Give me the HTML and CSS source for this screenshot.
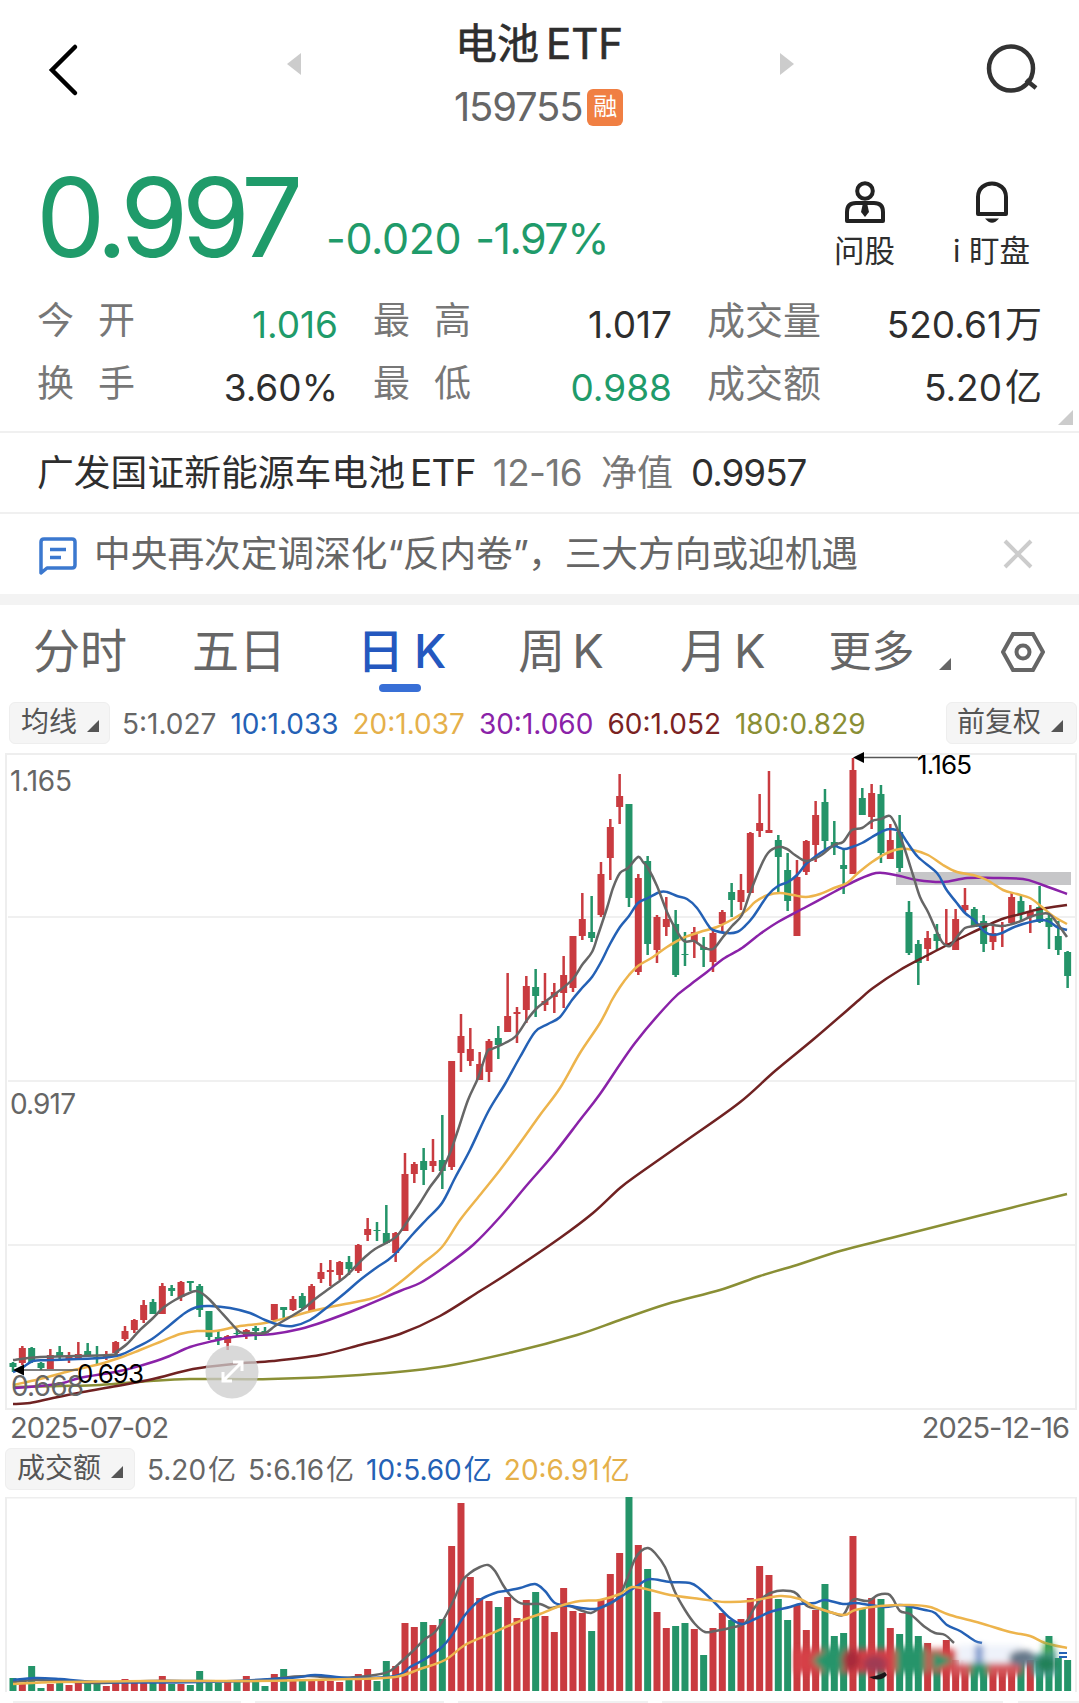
FILE: index.html
```html
<!DOCTYPE html>
<html lang="zh-CN">
<head>
<meta charset="UTF-8">
<meta name="viewport" content="width=device-width, initial-scale=1.0">
<title>电池ETF 159755</title>

<link rel="stylesheet" href="styles.css">
</head>

<body>

<header class="topbar">
<svg class="back" width="32" height="54" viewBox="0 0 32 54"><path d="M28 4L5 27L28 50"/></svg>
<svg class="arrow" width="14" height="22" viewBox="0 0 14 22"><path d="M14 0V22L0 11Z"/></svg>
<div class="title">
<h1><span>电池</span><span class="etf">ETF</span></h1>
<div class="code"><span>159755</span><i class="tag">融</i></div>
</div>
<svg class="arrow" width="14" height="22" viewBox="0 0 14 22"><path d="M0 0V22L14 11Z"/></svg>
<svg class="search" width="56" height="52" viewBox="0 0 56 52"><circle cx="26" cy="25.500" r="22"/><path d="M41 37L51 45"/></svg>
</header>

<section class="quote">
<div class="price">0.997</div>
<div class="change"><span>-0.020</span><span class="pct">-1.97%</span></div>
<div class="actions">
<div class="action">
<svg width="40" height="44" viewBox="0 0 40 44"><circle cx="20" cy="10" r="7.800"/><path d="M2 40V31Q2 22 11 22H29Q38 22 38 31V40Z"/><path class="fill" d="M18 22H22L24 31L20 36L16 31Z"/></svg>
<span>问股</span>
</div>
<div class="action">
<svg width="40" height="44" viewBox="0 0 40 44"><path d="M6 33V16C6 -2 34 -2 34 16V33Z"/><path class="fill" d="M13 37.500H27Q20 46 13 37.500Z"/></svg>
<span>i 盯盘</span>
</div>
</div>
</section>

<section class="stats">
<div class="stat"><label class="wide">今开</label><b class="down">1.016</b></div>
<div class="stat"><label class="wide">最高</label><b>1.017</b></div>
<div class="stat"><label>成交量</label><b>520.61<em>万</em></b></div>
<div class="stat"><label class="wide">换手</label><b>3.60%</b></div>
<div class="stat"><label class="wide">最低</label><b class="down">0.988</b></div>
<div class="stat"><label>成交额</label><b>5.20<em>亿</em></b></div>
<i class="corner"></i>
</section>

<section class="fund">
<span class="name">广发国证新能源车电池</span><span class="fund-etf">ETF</span>
<span class="date">12-16</span>
<span class="nav-label">净值</span>
<span class="nav-value">0.9957</span>
</section>

<section class="news">
<svg class="msg" width="38" height="38" viewBox="0 0 38 38"><path d="M2 36V5Q2 2 5 2H33Q36 2 36 5V28Q36 31 33 31H8Z"/><path d="M11 12.500H27M11 20.500H22"/></svg>
<p>中央再次定调深化<span class="q">“</span>反内卷<span class="q">”</span>，三大方向或迎机遇</p>
<svg class="close" width="30" height="30" viewBox="0 0 30 30"><path d="M2 2L28 28M28 2L2 28"/></svg>
</section>

<nav class="tabs">
<a>分时</a>
<a>五日</a>
<a class="active">日<span>K</span></a>
<a class="week">周<span>K</span></a>
<a class="month">月<span>K</span></a>
<a class="more">更多<i></i></a>
<svg class="gear" width="44" height="42" viewBox="0 0 44 42"><path d="M12 3H32L42 21L32 39H12L2 21Z"/><circle cx="22" cy="21" r="6.500"/></svg>
</nav>

<div class="legend">
<span class="chip">均线<i></i></span>
<span class="ma5">5:1.027</span>
<span class="ma10">10:1.033</span>
<span class="ma20">20:1.037</span>
<span class="ma30">30:1.060</span>
<span class="ma60">60:1.052</span>
<span class="ma180">180:0.829</span>
<span class="chip right">前复权<i></i></span>
</div>

<svg class="chart" id="kline" width="1079" height="662" viewBox="0 0 1079 662">
<rect class="frame" x="6" y="4" width="1070" height="655"/>
<path class="grid" d="M8 167H1075M8 331H1075M8 495H1075"/>
<rect class="band" x="896" y="122" width="175" height="13"/>
<g id="candles"></g>
<g id="maLines"></g>
<text class="axis" x="10" y="41" textLength="62">1.165</text>
<text class="axis" x="10" y="364" textLength="66">0.917</text>
<text class="axis" x="11" y="646" textLength="73">0.668</text>
<path class="pointer" d="M22 620H78M864 7.500H918"/>
<path class="head" d="M13 620L24 614.500V625.500ZM853 7.500L864 2V13Z"/>
<text class="mark" x="77" y="633" textLength="67">0.693</text>
<text class="mark" x="917" y="24" textLength="55">1.165</text>
<g class="expand">
<circle cx="232" cy="622" r="26.500"/>
<path d="M223 631L242 612M233 612H242V621M223 622V631H232"/>
</g>
</svg>

<div class="dates"><span>2025-07-02</span><span>2025-12-16</span></div>

<div class="legend vol-legend">
<span class="chip">成交额<i></i></span>
<span class="ma5">5.20<em>亿</em></span>
<span class="ma5">5:6.16<em>亿</em></span>
<span class="ma10">10:5.60<em>亿</em></span>
<span class="ma20">20:6.91<em>亿</em></span>
</div>

<svg class="chart" id="volume" width="1079" height="206" viewBox="0 0 1079 206">
<defs>
<filter id="soft" x="-10%" y="-40%" width="120%" height="180%"><feGaussianBlur stdDeviation="3"/></filter>
</defs>
<path class="frame" d="M6 195V0.500H1076V195"/>
<g id="bars"></g>
<g id="volLines"></g>
<g class="smudge" filter="url(#soft)">
<path class="pale" d="M958 148H1022V166H958Z"/>
<path class="red" d="M795 152H956V176H795Z"/>
<path class="rose" d="M952 166H1022V178H952Z"/>
<path class="green" d="M812 163L828 150H846L850 164L840 176H824ZM896 150H926V176H896ZM932 154L954 163L932 175ZM970 166H988V178H970Z"/>
<ellipse class="wine" cx="851" cy="163" rx="9" ry="11"/>
<ellipse class="plum" cx="875" cy="167" rx="12" ry="9"/>
<path class="blue" d="M975 148H983V166H975Z"/>
<path class="teal" d="M1034 158L1056 152V178H1032Z"/>
<ellipse class="slate" cx="1022" cy="161" rx="13" ry="8"/>
<ellipse class="moss" cx="1046" cy="167" rx="10" ry="9"/>
<path class="lime" d="M1043 146H1053V156H1043Z"/>
</g>
<path class="blot" d="M869 180Q878 179 885 175L887 178Q880 186 869 180Z"/>
<path class="tick" d="M1059 156H1067M1059 160H1067"/>
<path class="next" d="M13 205H241M255 205H444M458 205H648M662 205H1003M1018 205H1079"/>
</svg>

<script>
const STEP=9.333, X0=13;

// [up, high, low, bodyTop, bodyBottom]
const candles=[
[0,612,622,613,617],[1,596,615,598,613],[0,597,613,598,612],[0,612,620,613,618],[1,599,619,605,619],
[0,596,609,602,607],[1,602,613,607,609],[1,592,608,604,608],[0,593,607,601,606],[0,596,614,607,608],
[1,601,610,605,607],[1,591,603,592,603],[1,576,591,581,589],[1,569,583,570,580],[1,550,573,555,570],
[0,549,564,552,564],[1,533,564,536,564],[0,535,546,538,541],[1,531,551,532,547],[0,531,541,531,533],
[0,534,567,536,560],[0,561,590,561,587],[0,581,595,587,590],[1,585,600,586,593],[0,580,587,583,584],
[1,579,589,580,585],[0,576,590,578,581],[0,577,585,581,583],[1,554,572,554,570],[0,557,568,557,560],
[1,546,561,549,560],[0,543,560,546,558],[1,534,561,536,561],[1,513,533,522,529],[1,510,536,520,522],
[1,511,530,512,525],[0,506,525,512,519],[1,494,523,495,521],[1,468,491,479,485],[0,472,491,480,481],
[0,455,494,483,493],[1,482,512,483,503],[1,403,481,424,481],[1,412,433,414,424],[0,398,435,411,420],
[1,389,422,411,416],[0,365,439,410,421],[1,311,420,311,417],[1,264,322,286,303],[1,278,316,299,311],
[1,302,330,314,330],[1,289,332,291,322],[0,276,309,288,295],[1,223,282,266,282],[1,257,293,262,264],
[1,226,273,236,260],[0,219,267,237,246],[1,223,261,251,255],[1,233,263,242,247],[1,206,258,225,243],
[1,186,242,186,238],[1,143,190,169,186],[0,146,192,182,188],[1,112,167,124,165],[1,69,130,77,108],
[1,24,74,46,57],[0,54,157,54,148],[1,124,225,128,222],[0,106,205,111,194],[1,165,213,167,200],
[1,147,186,169,177],[0,160,227,174,225],[0,182,216,204,205],[1,177,208,182,192],[0,187,217,197,200],
[1,179,222,183,212],[1,160,182,162,174],[0,133,167,142,150],[1,124,160,140,152],[1,82,143,83,143],
[1,44,87,73,81],[1,21,83,80,83],[0,85,142,90,107],[0,103,161,120,151],[1,110,186,127,186],
[1,90,125,91,122],[1,51,112,65,95],[0,39,100,52,91],[0,71,105,92,97],[0,99,144,115,119],
[1,8,124,20,124],[0,38,65,48,65],[1,34,79,43,67],[0,35,113,44,103],[1,74,109,90,109],
[0,65,122,82,118],[0,151,205,162,203],[0,190,235,194,213],[1,181,211,188,199],[0,174,200,184,191],
[1,159,197,193,195],[1,159,200,169,200],[1,138,162,155,160],[0,157,177,159,177],[0,165,202,171,194],
[1,176,200,183,192],[1,172,197,176,177],[1,143,173,147,173],[0,146,171,151,164],[1,155,183,162,167],
[0,136,173,157,172],[0,163,199,168,177],[0,171,205,186,200],[0,201,238,202,226]
];

const volumes=[
13,8,25,3,7,8,6,8,8,8,5,8,12,9,9,9,15,7,7,6,20,9,8,9,9,15,9,5,17,22,11,11,11,12,10,9,11,17,22,10,
30,25,68,64,69,66,72,145,188,114,93,90,84,94,73,91,99,75,59,103,80,78,60,91,117,138,194,146,122,79,
63,65,68,62,36,63,78,71,72,93,125,116,92,71,86,61,81,107,55,58,155,83,93,92,63,57,84,55,48,31,
51,31,31,31,31,31,31,31,31,31,30,55,33,31
];

const maLines={
ma180:[[13,637],[60,636],[100,635],[150,631],[190,629],[270,629],[360,625],[440,617],[513,602],[577,585],[620,570],[667,554],[720,540],[760,526],[797,515],[840,501],[891,488],[978,466],[1067,444]],
ma60:[[13,654],[30,653],[53,648],[83,642],[117,636],[153,629],[193,619],[233,614],[273,611],[320,605],[360,595],[400,584],[440,566],[480,541],[510,522],[560,488],[593,463],[620,438],[640,423],[687,390],[739,353],[775,321],[815,288],[859,250],[873,238],[900,220],[928,205],[947,195],[967,185],[984,177],[1002,169],[1021,164],[1040,159],[1067,155]],
ma30:[[13,638],[40,636],[63,633],[80,628],[120,621],[143,615],[167,607],[190,597],[213,591],[233,587],[253,585],[273,584],[300,579],[323,572],[360,558],[400,541],[420,533],[443,518],[473,495],[500,467],[527,435],[553,405],[580,370],[600,344],[635,293],[672,250],[690,235],[707,222],[723,209],[742,198],[760,184],[778,172],[806,157],[834,142],[853,132],[872,124],[883,123],[900,126],[917,130],[943,132],[967,128],[993,128],[1023,129],[1040,134],[1067,144]],
ma20:[[13,635],[40,629],[70,621],[100,614],[122,607],[140,600],[160,592],[180,584],[197,581],[215,581],[240,576],[265,573],[290,567],[312,561],[345,554],[370,549],[385,543],[403,530],[423,513],[442,497],[460,470],[480,445],[500,420],[520,393],[540,365],[560,338],[580,303],[600,273],[612,250],[620,237],[629,225],[638,216],[653,207],[667,197],[683,188],[700,182],[717,177],[733,169],[747,160],[755,152],[768,145],[780,143],[793,145],[806,147],[820,144],[834,138],[847,133],[858,123],[872,112],[887,103],[900,99],[913,100],[928,105],[943,115],[957,122],[973,125],[987,130],[1003,140],[1017,144],[1030,148],[1042,157],[1053,166],[1067,174]],
ma10:[[13,622],[22,618],[33,611],[50,610],[100,608],[120,605],[135,598],[152,589],[170,575],[185,563],[197,557],[210,556],[230,558],[250,563],[265,570],[280,575],[293,576],[310,570],[325,559],[345,543],[360,530],[376,518],[388,510],[398,501],[413,484],[427,469],[442,453],[455,428],[470,400],[488,362],[505,334],[520,307],[535,282],[548,274],[560,267],[572,250],[582,238],[592,227],[601,212],[610,194],[620,177],[629,166],[638,153],[648,148],[660,142],[667,142],[677,146],[687,149],[697,158],[708,175],[713,180],[727,183],[737,182],[745,176],[753,167],[768,145],[778,136],[788,132],[797,125],[806,114],[816,106],[825,100],[834,96],[844,99],[852,97],[862,93],[872,87],[881,82],[890,79],[900,82],[907,92],[918,107],[937,123],[946,139],[956,152],[965,163],[974,170],[985,182],[993,185],[1002,183],[1012,178],[1023,174],[1035,171],[1043,170],[1050,172],[1057,177],[1067,180]],
ma5:[[13,610],[40,607],[110,605],[116,602],[127,594],[139,581],[152,569],[163,558],[175,550],[187,544],[196,541],[203,544],[210,550],[220,561],[230,572],[240,582],[250,583],[265,583],[275,576],[290,567],[303,559],[315,549],[330,538],[345,527],[355,517],[365,507],[375,499],[388,492],[397,486],[407,472],[420,453],[430,437],[441,422],[450,403],[458,380],[468,350],[478,328],[487,302],[492,299],[505,293],[516,286],[527,270],[537,258],[550,248],[572,230],[582,215],[592,202],[598,185],[607,158],[613,138],[620,123],[628,118],[638,107],[643,112],[648,118],[657,136],[667,162],[675,178],[684,191],[694,191],[703,197],[713,199],[723,187],[732,176],[742,165],[750,143],[760,118],[768,103],[778,97],[787,99],[795,105],[806,111],[820,106],[834,95],[843,92],[852,80],[862,78],[872,71],[881,69],[890,66],[897,78],[905,100],[913,125],[920,147],[928,162],[937,182],[943,193],[950,196],[957,187],[965,178],[974,176],[984,174],[1002,176],[1012,174],[1021,171],[1030,167],[1040,164],[1049,164],[1057,173],[1067,187]]
};

const volLines={
ma5:[[13,185],[35,183],[60,184],[100,186],[150,184],[200,184],[250,184],[290,180],[310,179],[340,181],[375,178],[390,174],[402,164],[415,152],[425,142],[435,135],[445,120],[455,100],[462,84],[470,76],[480,70],[488,68],[495,74],[503,88],[510,98],[518,105],[525,107],[540,107],[550,111],[560,109],[570,109],[580,113],[591,116],[600,111],[612,106],[620,98],[627,82],[635,62],[641,54],[648,51],[655,56],[665,70],[675,95],[685,113],[695,127],[705,135],[715,134],[730,131],[745,126],[755,110],[765,99],[777,94],[790,94],[797,97],[807,109],[820,112],[833,116],[843,118],[850,106],[855,102],[868,104],[878,98],[888,97],[893,102],[900,114],[910,117],[925,130],[935,136],[945,138],[954,146]],
ma10:[[13,183],[35,181],[60,182],[100,185],[200,185],[290,181],[315,178],[350,181],[395,179],[410,170],[425,162],[442,150],[452,138],[465,118],[480,103],[495,96],[505,94],[520,91],[535,87],[545,94],[555,106],[570,109],[595,112],[612,105],[625,97],[640,87],[650,82],[670,85],[690,86],[700,92],[715,106],[730,121],[742,127],[755,122],[770,115],[790,110],[800,107],[815,106],[825,103],[843,107],[855,106],[870,108],[885,110],[900,108],[912,110],[925,113],[935,116],[947,128],[960,134],[975,144],[982,146]],
ma20:[[13,187],[60,185],[150,184],[250,184],[350,182],[395,180],[420,172],[445,163],[465,148],[490,137],[520,124],[540,117],[560,109],[580,104],[600,103],[620,97],[632,90],[650,93],[670,98],[700,102],[725,105],[750,104],[780,99],[800,102],[815,110],[843,118],[855,113],[880,109],[910,108],[930,110],[950,118],[980,126],[1010,135],[1030,139],[1045,146],[1067,151]]
};

function smooth(p){
let d=`M${p[0][0]} ${p[0][1]}`;
for(let i=0;i<p.length-1;i++){
const a=p[i-1]||p[i], b=p[i], c=p[i+1], e=p[i+2]||c;
d+=`C${b[0]+(c[0]-a[0])/6} ${b[1]+(c[1]-a[1])/6} ${c[0]-(e[0]-b[0])/6} ${c[1]-(e[1]-b[1])/6} ${c[0]} ${c[1]}`;
}
return d;
}

function drawLines(id,lines){
let out='';
for(let k in lines) out+=`<path class="line ${k}" d="${smooth(lines[k])}"/>`;
document.getElementById(id).innerHTML=out;
}

let k='', v='';
candles.forEach((c,i)=>{
const x=X0+i*STEP, cls=c[0]?'up':'dn';
k+=`<g class="${cls}"><rect x="${x-1.25}" y="${c[1]}" width="2.5" height="${c[2]-c[1]}"/><rect x="${x-3.5}" y="${c[3]}" width="7" height="${c[4]-c[3]}"/></g>`;
v+=`<rect class="${cls}" x="${x-3.5}" y="${194-volumes[i]}" width="7" height="${volumes[i]}"/>`;
});
document.getElementById('candles').innerHTML=k;
document.getElementById('bars').innerHTML=v;
drawLines('maLines',maLines);
drawLines('volLines',volLines);
</script>

</body>
</html>
```
FILE: styles.css
```css
*{box-sizing:border-box}
body{margin:0;width:1079px;height:1703px;overflow:hidden;background:#fff;color:#2e2e2e;
font-family:Inter,"Noto Sans CJK SC",sans-serif}
svg{display:block;flex:none}
svg path,svg circle{fill:none;stroke:#222}
em,i{font-style:normal}

.topbar{display:flex;align-items:flex-start;height:150px;padding:0 38px 0 47px}
.back{margin-top:43px}
.back path{stroke:#000;stroke-width:4.500;stroke-linecap:round}
.arrow{margin-top:53px}
.arrow path{fill:#ccc;stroke:none}
.back + .arrow{margin-left:208px}
.title{width:170px;margin:0 155px 0 154px}
.search{margin-top:43px;margin-left:auto}
.search circle,.search path{stroke:#333;stroke-width:4.500}
h1{display:flex;gap:7px;margin:14px 0 0;font-size:42px;line-height:60px;font-weight:400;white-space:nowrap;-webkit-text-stroke:.6px #2e2e2e}
.code{display:flex;align-items:center;gap:5px;margin-top:13px;font-size:40px;line-height:40px;color:#666}
.code span{letter-spacing:-1.200px;margin-left:-1px}
.tag{width:36px;height:37px;border-radius:6px;background:#f07f43;color:#fff;font-size:24px;line-height:36px;text-align:center}

.quote{display:flex;height:144px;padding-left:36px}
.price{width:290px;font-size:110px;line-height:135px;letter-spacing:-6.700px;color:#1f9b6a}
.change{display:flex;gap:14px;padding-top:65px;font-size:43px;line-height:46px;letter-spacing:-.4px;color:#1f9b6a;white-space:nowrap}
.pct{letter-spacing:-1.500px}
.actions{display:flex;gap:58px;margin-left:auto;padding:31px 49px 0 0}
.action{display:flex;flex-direction:column;align-items:center;font-size:30.500px;line-height:40px}
.action svg path,.action svg circle{stroke-width:4;stroke-linejoin:round}
.action svg .fill{fill:#222;stroke:none}
.action span{margin-top:6px;white-space:nowrap}

.stats{position:relative;display:grid;grid-template-columns:301px 299px 335px;grid-auto-rows:63px;column-gap:35px;height:139px;padding-left:37px;border-bottom:2px solid #f0f0f0}
.stat{display:flex;justify-content:space-between;line-height:54px;font-size:37px}
.stat label{color:#777;font-size:38px;line-height:52px}
.stat .wide{font-size:37px;line-height:54px;letter-spacing:24px}
.stat b{font-weight:400;padding-top:4px}
.stat em{margin-left:3px}
.stat .down{color:#1f9b6a}
.corner{position:absolute;right:6px;bottom:6px;border-left:15px solid transparent;border-bottom:15px solid #ccc}

.fund{display:flex;height:81px;padding-left:37px;line-height:80px;font-size:36.800px;white-space:nowrap;border-bottom:2px solid #f0f0f0}
.fund-etf{margin-left:5px;letter-spacing:-.6px}
.date{margin-left:17px;color:#777;letter-spacing:-.6px}
.nav-label{margin-left:19px;color:#777;font-size:36px}
.nav-value{margin-left:18px;letter-spacing:-1px}

.news{display:flex;height:91px;padding-left:39px;border-bottom:11px solid #f3f3f3}
.msg{margin-top:23px}
.msg path{stroke:#3b78cf;stroke-width:3.500;stroke-linejoin:round}
.news p{margin:0 0 0 17px;width:780px;font-size:36.700px;line-height:80px;color:#666;white-space:nowrap}
.q{font-family:Inter,sans-serif;letter-spacing:-1px}
.close{margin:25px 0 0 129px}
.close path{stroke:#ccc;stroke-width:4}

.tabs{display:flex;height:97px;padding-left:33px;font-size:47px;line-height:92px;color:#666}
.tabs a{position:relative;display:flex;gap:7px;margin-right:65px;white-space:nowrap}
.tabs .active{gap:10px;color:#2458bf;font-weight:500;margin-left:6px;margin-right:72px}
.tabs .active::after{content:"";position:absolute;left:22px;bottom:10px;width:42px;height:8px;border-radius:4px;background:#386fd6}
.tabs .week{margin-right:76px}
.tabs .month{margin-right:63px}
.tabs .more{font-size:43px;margin-right:50px}
.more i{margin-left:18px;align-self:flex-start;margin-top:53px;border-left:12px solid transparent;border-bottom:12px solid #666}
.gear{margin-top:26px}
.gear path,.gear circle{stroke:#666;stroke-width:4}

.legend{display:flex;height:48px;padding-left:9px;font-size:28px;line-height:45px;white-space:nowrap}
.chip{display:flex;height:42px;width:101px;padding-left:11px;border-radius:6px;background:#f5f5f5;border:1px solid #eee;font-size:28px;line-height:39px;color:#555}
.chip i{width:0;height:0;margin:17px 0 0 10px;border-left:12px solid transparent;border-bottom:12px solid #555}
.legend .right{width:131px;padding-left:10px;margin-left:auto;margin-right:2px}
.ma5{color:#666}
.ma10{color:#2461b5}
.ma20{color:#e5b04a}
.ma30{color:#8a22a8}
.ma60{color:#7a2222}
.ma180{color:#8a8f35}
.legend .ma5{margin-left:12px}
.legend .ma10,.legend .ma20,.legend .ma30,.legend .ma60,.legend .ma180{margin-left:14px}

.chart .frame{fill:none;stroke:#eee;stroke-width:2}
.chart .grid{stroke:#f0f0f0;stroke-width:2}
.band{fill:#c6c6c8}
.up{fill:#c93b40}
.dn{fill:#249469}
.chart .line{fill:none;stroke-width:2.500}
.line.ma5{stroke:#666}
.line.ma10{stroke:#2461b5}
.line.ma20{stroke:#edb44c}
.line.ma30{stroke:#8a22a8}
.line.ma60{stroke:#702222}
.line.ma180{stroke:#8a8f35}
.axis{font-size:28px;fill:#666}
.mark{font-size:26px;fill:#000}
.chart .pointer{stroke:#555;stroke-width:1.500}
.chart .head{fill:#000;stroke:none}
.chart .expand circle{fill:#ccc;fill-opacity:.75;stroke:none}
.expand path{stroke:#fff;stroke-width:3}

.dates{display:flex;justify-content:space-between;height:36px;padding:0 10px;font-size:29px;line-height:32px;letter-spacing:-1px;color:#666}
.vol-legend{height:49px;padding-left:5px}
.vol-legend .chip{width:130px}
.vol-legend em{margin-left:2px}
.vol-legend .ma10,.vol-legend .ma20{margin-left:12px}

/* smeared strip over the last bars */
.smudge path,.smudge ellipse{stroke:none}
.smudge .pale{fill:#eef2fa}
.smudge .red{fill:#d63f46}
.smudge .rose{fill:#d4565b}
.smudge .green{fill:#27946b}
.smudge .wine{fill:#a82a3a}
.smudge .plum{fill:#a03a52}
.smudge .blue{fill:#7795cc}
.smudge .slate{fill:#66788a}
.smudge .teal{fill:#4d9c96}
.smudge .moss{fill:#208158}
.smudge .lime{fill:#4aa84e}
.chart .blot{fill:#1b1518;stroke:none}
.chart .tick{stroke:#2461b5;stroke-width:2}
.chart .next{stroke:#f0f0f0;stroke-width:2}
```
